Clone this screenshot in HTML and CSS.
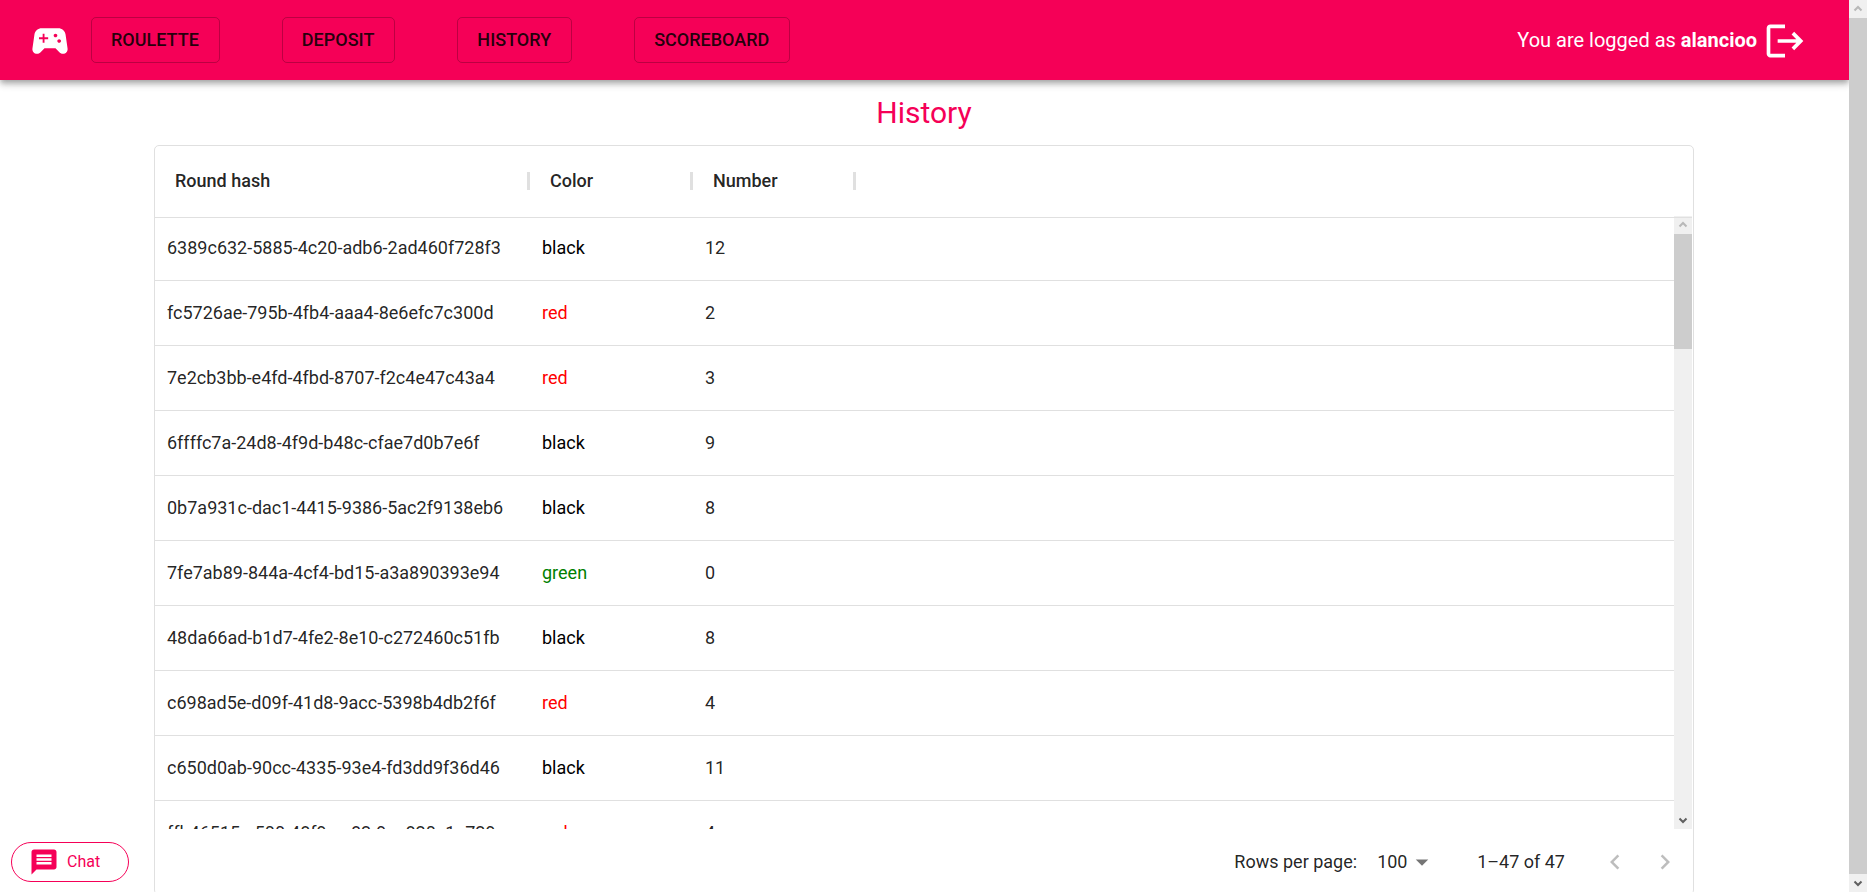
FILE: index.html
```html
<!DOCTYPE html>
<html lang="en">
<head>
<meta charset="utf-8">
<title>History</title>
<link rel="stylesheet" href="styles.css">
</head>
<body>
<div class="page">
  <header class="appbar">
    <svg class="icon-large" viewBox="0 0 24 24" aria-hidden="true"><path d="M21.58 16.09l-1.09-7.66C20.21 6.46 18.52 5 16.53 5H7.47C5.48 5 3.79 6.46 3.51 8.43l-1.09 7.66C2.2 17.63 3.39 19 4.94 19c.68 0 1.32-.27 1.8-.75L9 16h6l2.25 2.25c.48.48 1.13.75 1.8.75 1.56 0 2.75-1.37 2.53-2.91zM11 11H9v2H8v-2H6v-1h2V8h1v2h2v1zm4-1c-.55 0-1-.45-1-1s.45-1 1-1 1 .45 1 1-.45 1-1 1zm2 3c-.55 0-1-.45-1-1s.45-1 1-1 1 .45 1 1-.45 1-1 1z"/></svg>
    <nav class="nav">
      <a class="nav-link" href="#roulette">ROULETTE</a>
      <a class="nav-link" href="#deposit">DEPOSIT</a>
      <a class="nav-link" href="#history">HISTORY</a>
      <a class="nav-link" href="#scoreboard">SCOREBOARD</a>
    </nav>
    <p class="user">You are logged as <strong>alancioo</strong></p>
    <button class="logout" type="button" aria-label="Log out">
      <svg class="icon-large" viewBox="0 0 24 24" aria-hidden="true"><path d="M17 7l-1.41 1.41L18.17 11H8v2h10.17l-2.58 2.58L17 17l5-5zM4 5h8V3H4c-1.1 0-2 .9-2 2v14c0 1.1.9 2 2 2h8v-2H4V5z"/></svg>
    </button>
  </header>

  <main class="content">
    <h1 class="title">History</h1>
    <section class="grid">
      <div class="grid-main">
        <div class="viewport">
          <table class="rounds">
            <colgroup><col class="col-hash"><col class="col-color"><col class="col-number"><col></colgroup>
            <thead>
              <tr><th><span>Round hash</span></th><th><span>Color</span></th><th><span>Number</span></th><td></td></tr>
            </thead>
            <tbody>
              <tr><td>6389c632-5885-4c20-adb6-2ad460f728f3</td><td class="black">black</td><td>12</td><td></td></tr>
              <tr><td>fc5726ae-795b-4fb4-aaa4-8e6efc7c300d</td><td class="red">red</td><td>2</td><td></td></tr>
              <tr><td>7e2cb3bb-e4fd-4fbd-8707-f2c4e47c43a4</td><td class="red">red</td><td>3</td><td></td></tr>
              <tr><td>6ffffc7a-24d8-4f9d-b48c-cfae7d0b7e6f</td><td class="black">black</td><td>9</td><td></td></tr>
              <tr><td>0b7a931c-dac1-4415-9386-5ac2f9138eb6</td><td class="black">black</td><td>8</td><td></td></tr>
              <tr><td>7fe7ab89-844a-4cf4-bd15-a3a890393e94</td><td class="green">green</td><td>0</td><td></td></tr>
              <tr><td>48da66ad-b1d7-4fe2-8e10-c272460c51fb</td><td class="black">black</td><td>8</td><td></td></tr>
              <tr><td>c698ad5e-d09f-41d8-9acc-5398b4db2f6f</td><td class="red">red</td><td>4</td><td></td></tr>
              <tr><td>c650d0ab-90cc-4335-93e4-fd3dd9f36d46</td><td class="black">black</td><td>11</td><td></td></tr>
              <tr><td>ffb46515-e500-48f9-ae82-9ac820c1a729</td><td class="red">red</td><td>4</td><td></td></tr>
            </tbody>
          </table>
        </div>
        <div class="scrollbar grid-scrollbar">
          <svg class="scroll-arrow up" viewBox="0 0 18 18"><path d="M5.5 10.500L9 7l3.500 3.500"/></svg>
          <div class="track"><div class="thumb grid-thumb"></div></div>
          <svg class="scroll-arrow" viewBox="0 0 18 18"><path d="M5.500 7.500L9 11l3.500-3.500"/></svg>
        </div>
      </div>
      <footer class="pagination">
        <label for="rows">Rows per page:</label>
        <div class="select-wrap">
          <select id="rows" class="select"><option>100</option></select>
          <svg class="icon caret" viewBox="0 0 24 24" aria-hidden="true"><path d="M7 10l5 5 5-5z"/></svg>
        </div>
        <span class="range">1–47 of 47</span>
        <button class="page-button" type="button" disabled aria-label="Previous page"><svg class="icon" viewBox="0 0 24 24"><path d="M15.410 16.590L10.830 12l4.580-4.590L14 6l-6 6 6 6z"/></svg></button>
        <button class="page-button" type="button" disabled aria-label="Next page"><svg class="icon" viewBox="0 0 24 24"><path d="M8.590 16.590L13.170 12 8.590 7.410 10 6l6 6-6 6z"/></svg></button>
      </footer>
    </section>
  </main>

  <button class="chat" type="button">
    <svg class="icon" viewBox="0 0 24 24" aria-hidden="true"><path d="M20 2H4c-1.100 0-1.990.9-1.990 2L2 22l4-4h14c1.100 0 2-.9 2-2V4c0-1.100-.9-2-2-2zm-2 12H6v-2h12v2zm0-3H6V9h12v2zm0-3H6V6h12v2z"/></svg>
    Chat
  </button>
</div>
<div class="scrollbar">
  <svg class="scroll-arrow up" viewBox="0 0 18 18"><path d="M5.500 10.500L9 7l3.500 3.500"/></svg>
  <div class="track"><div class="thumb page-thumb"></div></div>
  <svg class="scroll-arrow" viewBox="0 0 18 18"><path d="M5.500 7.500L9 11l3.500-3.500"/></svg>
</div>
</body>
</html>
```
FILE: styles.css
```css
* {
  box-sizing: border-box;
}

body {
  display: flex;
  height: 100vh;
  margin: 0;
  overflow: hidden;
  background: #fff;
  color: rgba(0, 0, 0, 0.87);
  font-family: Roboto, "Liberation Sans", sans-serif;
  font-size: 18px;
  line-height: 26px;
}

button,
select {
  margin: 0;
  padding: 0;
  border: 0;
  background: none;
  color: inherit;
  font: inherit;
}

svg {
  display: block;
  fill: currentColor;
}

.icon {
  width: 30px;
  height: 30px;
}

.icon-large {
  flex: none;
  width: 44px;
  height: 44px;
  margin-top: 2px;
}

.page {
  display: flex;
  flex: 1;
  flex-direction: column;
  min-width: 0;
  overflow: hidden;
}

/* Top bar */
.appbar {
  display: flex;
  flex: none;
  align-items: center;
  height: 80px;
  padding: 0 42px 0 28px;
  background: #f50057;
  box-shadow: 0 3px 5px -1px rgba(0, 0, 0, 0.2), 0 5px 6px rgba(0, 0, 0, 0.14), 0 1px 12px rgba(0, 0, 0, 0.12);
  color: #fff;
}

.nav {
  display: flex;
  gap: 62px;
  margin-left: 19px;
}

.nav-link {
  padding: 9px 20px 9px 19px;
  border: 1px solid rgba(0, 0, 0, 0.23);
  border-radius: 5px;
  color: rgba(0, 0, 0, 0.87);
  font-weight: 500;
  text-decoration: none;
}

.user {
  margin: 0 6px 0 auto;
  font-size: 20px;
}

.logout {
  cursor: pointer;
}

/* Results grid */
.content {
  display: flex;
  flex: 1;
  flex-direction: column;
  align-items: center;
  min-height: 0;
  padding-right: 1px;
}

.title {
  margin: 0;
  padding: 12px 0;
  color: #f50057;
  font-size: 30px;
  font-weight: 400;
  line-height: 41px;
}

.grid {
  display: flex;
  flex: 1;
  flex-direction: column;
  width: 83.333%;
  min-height: 0;
  margin-bottom: -3px;
  border: 1px solid #e0e0e0;
  border-radius: 5px;
}

.grid-main {
  display: flex;
  flex: 1;
  min-height: 0;
  padding-right: 1px;
}

.viewport {
  flex: 1;
  overflow: hidden;
}

.rounds {
  width: 100%;
  border-collapse: separate;
  border-spacing: 0;
  table-layout: fixed;
}

.col-hash {
  width: 375px;
}

.col-color,
.col-number {
  width: 163px;
}

.rounds th,
.rounds td {
  height: 65px;
  padding: 0 12px;
  border-bottom: 1px solid #e0e0e0;
  text-align: left;
  white-space: nowrap;
}

.rounds thead th,
.rounds thead td {
  height: 72px;
  padding: 0 0 2px;
}

.rounds th span {
  display: block;
  padding-left: 20px;
  border-right: 3px solid #e0e0e0;
  font-weight: 500;
  line-height: 18px;
}

.rounds tbody tr:first-child td {
  height: 63px;
  padding-bottom: 2px;
}

.rounds .black {
  color: #000;
}

.rounds .red {
  color: #f00;
}

.rounds .green {
  color: #008000;
}

/* Scrollbars */
.scrollbar {
  display: flex;
  flex: none;
  flex-direction: column;
  width: 18px;
  background: #f0f0f0;
}

.grid-scrollbar {
  position: relative;
  margin-top: 70px;
}

.grid-scrollbar::before {
  content: "";
  position: absolute;
  top: 1px;
  left: 0;
  width: 100%;
  height: 1px;
  background: #e0e0e0;
}

.track {
  flex: 1;
}

.thumb {
  background: #cdcdcd;
}

.grid-thumb {
  height: 20%;
}

.page-thumb {
  height: 100%;
}

.scroll-arrow {
  width: 18px;
  height: 18px;
  fill: none;
  stroke: #606060;
  stroke-width: 2;
}

.scroll-arrow.up {
  stroke: #b8b8b8;
}

/* Pagination */
.pagination {
  display: flex;
  flex: none;
  align-items: center;
  justify-content: flex-end;
  height: 65px;
  padding-right: 3px;
}

.select-wrap {
  position: relative;
  margin: 0 40px 0 20px;
}

.select {
  display: block;
  width: 60px;
  height: 30px;
  appearance: none;
}

.caret {
  position: absolute;
  top: 0;
  right: 0;
  color: rgba(0, 0, 0, 0.54);
  pointer-events: none;
}

.range {
  margin-right: 25px;
}

.page-button {
  padding: 10px;
  color: rgba(0, 0, 0, 0.26);
}

/* Floating chat toggle */
.chat {
  position: fixed;
  bottom: 10px;
  left: 11px;
  display: flex;
  align-items: center;
  gap: 8px;
  width: 118px;
  height: 40px;
  padding-left: 17px;
  border: 1px solid #f50057;
  border-radius: 20px;
  background: #fff;
  color: #f50057;
  font-size: 16px;
}
```
